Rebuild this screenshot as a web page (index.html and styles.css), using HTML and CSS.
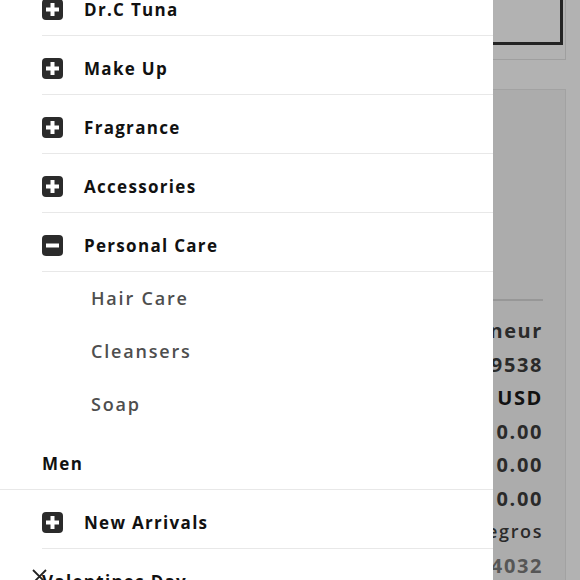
FILE: index.html
```html
<!DOCTYPE html>
<html lang="en">
<head>
    <meta charset="UTF-8">
    <meta name="viewport" content="width=device-width, initial-scale=1.0">
    <title>Shop - Menu</title>
    <link rel="stylesheet" href="styles.css">
</head>
<body>
    <!-- page behind the menu -->
    <main class="page">
        <div class="top-box">
            <div class="checkout-btn">Checkout</div>
        </div>

        <section class="summary">
            <div class="summary-head"></div>
            <div class="summary-row"><span>Member</span><span class="val">Entrepreneur</span></div>
            <div class="summary-row"><span>Order</span><span class="val">#1029538</span></div>
            <div class="summary-row"><span>Currency</span><span class="val strong">USD</span></div>
            <div class="summary-row"><span>Subtotal</span><span class="val">0.00</span></div>
            <div class="summary-row"><span>Shipping</span><span class="val">0.00</span></div>
            <div class="summary-row"><span>Total</span><span class="val">0.00</span></div>
            <div class="summary-row"><span>Ship to</span><span class="val light">Montenegros</span></div>
            <div class="summary-row"><span>Zip</span><span class="val muted">84032</span></div>
        </section>
    </main>

    <div class="overlay"></div>

    <!-- side menu -->
    <aside class="drawer">
        <ul class="menu">
            <li>
                <ul class="cat-list">
                    <li class="cat">
                        <div class="row">
                            <svg class="toggle" viewBox="0 0 21 21"><rect width="21" height="21" rx="4"/><path d="M4 8.5h13v4H4zM8.5 4h4v13h-4z"/></svg>
                            Dr.C Tuna
                        </div>
                    </li>
                    <li class="cat">
                        <div class="row">
                            <svg class="toggle" viewBox="0 0 21 21"><rect width="21" height="21" rx="4"/><path d="M4 8.5h13v4H4zM8.5 4h4v13h-4z"/></svg>
                            Make Up
                        </div>
                    </li>
                    <li class="cat">
                        <div class="row">
                            <svg class="toggle" viewBox="0 0 21 21"><rect width="21" height="21" rx="4"/><path d="M4 8.5h13v4H4zM8.5 4h4v13h-4z"/></svg>
                            Fragrance
                        </div>
                    </li>
                    <li class="cat">
                        <div class="row">
                            <svg class="toggle" viewBox="0 0 21 21"><rect width="21" height="21" rx="4"/><path d="M4 8.5h13v4H4zM8.5 4h4v13h-4z"/></svg>
                            Accessories
                        </div>
                    </li>
                    <li class="cat open">
                        <div class="row">
                            <svg class="toggle" viewBox="0 0 21 21"><rect width="21" height="21" rx="4"/><path d="M4 8.5h13v4H4z"/></svg>
                            Personal Care
                        </div>
                        <ul class="sub">
                            <li>Hair Care</li>
                            <li>Cleansers</li>
                            <li>Soap</li>
                        </ul>
                    </li>
                </ul>
            </li>
            <li class="top">
                <div class="row">Men</div>
            </li>
            <li>
                <ul class="cat-list">
                    <li class="cat">
                        <div class="row">
                            <svg class="toggle" viewBox="0 0 21 21"><rect width="21" height="21" rx="4"/><path d="M4 8.5h13v4H4zM8.5 4h4v13h-4z"/></svg>
                            New Arrivals
                        </div>
                    </li>
                </ul>
            </li>
            <li class="top last">
                <div class="row">Valentines Day</div>
            </li>
        </ul>

        <!-- close button -->
        <button class="close-btn" aria-label="Close">
            <svg viewBox="0 0 15 15"><path d="M1 1l13 13M14 1L1 14"/></svg>
        </button>
    </aside>
</body>
</html>
```

FILE: styles.css
```css
body {
    margin: 0;
    font-family: 'Open Sans', 'Liberation Sans', sans-serif;
    background-color: #fff;
    color: #222;
    overflow: hidden;
    height: 580px;
}

/* page behind */
.page {
    margin-top: -20px;
    padding: 0 14px 0 20px;
}

.top-box {
    height: 78px;
    border: 1px solid #e4e4e4;
}

.checkout-btn {
    height: 58px;
    margin-right: 2px;
    border: 3px solid #333;
    color: transparent;
}

.summary {
    margin-top: 29px;
    height: 600px;
    border: 1px solid #e9e9e9;
    background-color: #f7f7f7;
    padding: 0 22px 0 20px;
}

.summary-head {
    height: 209px;
    border-bottom: 2px solid #d8d8d8;
    margin-bottom: 13px;
}

.summary-row {
    display: flex;
    justify-content: space-between;
    line-height: 33.5px;
    font-size: 20px;
    font-weight: 700;
    letter-spacing: 1.6px;
    color: #3d3d3d;
}

.summary-row .strong {
    color: #1a1a1a;
}

.summary-row .light {
    font-weight: 600;
    font-size: 18px;
}

.summary-row .muted {
    color: #7c7c7c;
}

.overlay {
    position: fixed;
    inset: 0;
    background-color: rgba(0, 0, 0, 0.3);
}

/* drawer */
.drawer {
    position: fixed;
    top: 0;
    left: 0;
    bottom: 0;
    width: 493px;
    background-color: #fff;
    overflow: hidden;
}

.menu,
.cat-list,
.sub {
    list-style: none;
    margin: 0;
    padding: 0;
}

.menu {
    margin-top: -23px;
}

.row {
    display: flex;
    align-items: center;
    height: 21px;
    padding: 22px 0 15px;
    font-size: 17px;
    font-weight: 700;
    letter-spacing: 1.3px;
    color: #111;
}

.cat-list {
    margin-left: 42px;
}

.cat .row {
    border-bottom: 1px solid #e8e8e8;
}

.toggle {
    width: 21px;
    height: 21px;
    flex-shrink: 0;
    margin-right: 21px;
}

.toggle rect {
    fill: #2b2b2b;
}

.toggle path {
    fill: #fff;
}

.sub li {
    height: 53px;
    line-height: 53px;
    padding-left: 49px;
    font-size: 18px;
    font-weight: 600;
    letter-spacing: 1.8px;
    color: #4e4e4e;
}

.top .row {
    padding-left: 42px;
    border-bottom: 1px solid #e8e8e8;
}

.top.last .row {
    border-bottom: none;
}

.close-btn {
    position: absolute;
    left: 32px;
    top: 569px;
    width: 15px;
    height: 15px;
    padding: 0;
    border: none;
    background: none;
}

.close-btn svg {
    display: block;
    width: 15px;
    height: 15px;
}

.close-btn path {
    stroke: #222;
    stroke-width: 1.8;
    fill: none;
}
```
